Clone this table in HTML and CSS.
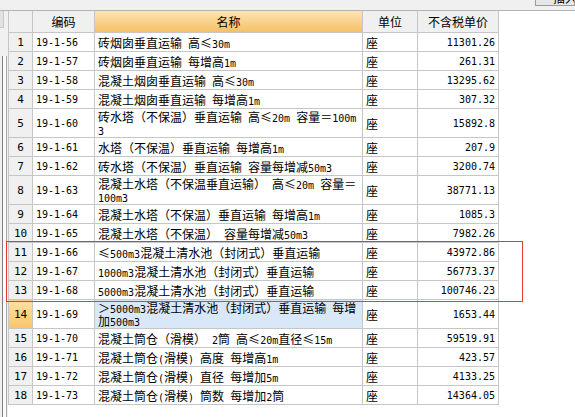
FILE: index.html
```html
<!DOCTYPE html>
<html lang="zh-CN">
<head>
<meta charset="utf-8">
<title>定额</title>
<link rel="stylesheet" href="styles.css">
</head>
<body>
<div class="app">
  <div class="toolbar"><span class="btn">插入</span></div>
  <div class="main">
    <div class="side"><div class="side-top"></div><div class="side-track"></div></div>
    <table class="grid">
      <colgroup><col class="c-no"><col class="c-code"><col class="c-name"><col class="c-unit"><col class="c-price"></colgroup>
      <thead>
        <tr><th class="h-no"></th><th>编码</th><th class="h-name">名称</th><th>单位</th><th>不含税单价</th></tr>
      </thead>
      <tbody>
        <tr><td class="no">1</td><td class="code">19-1-56</td><td class="name">砖烟囱垂直运输<span class="a"> </span>高≤<span class="a">30m</span></td><td class="unit">座</td><td class="price">11301.26</td></tr>
        <tr><td class="no">2</td><td class="code">19-1-57</td><td class="name">砖烟囱垂直运输<span class="a"> </span>每增高<span class="a">1m</span></td><td class="unit">座</td><td class="price">261.31</td></tr>
        <tr><td class="no">3</td><td class="code">19-1-58</td><td class="name">混凝土烟囱垂直运输<span class="a"> </span>高≤<span class="a">30m</span></td><td class="unit">座</td><td class="price">13295.62</td></tr>
        <tr><td class="no">4</td><td class="code">19-1-59</td><td class="name">混凝土烟囱垂直运输<span class="a"> </span>每增高<span class="a">1m</span></td><td class="unit">座</td><td class="price">307.32</td></tr>
        <tr class="tall"><td class="no">5</td><td class="code">19-1-60</td><td class="name">砖水塔（不保温）垂直运输<span class="a"> </span>高≤<span class="a">20m </span>容量＝<span class="a">100m</span><br><span class="a">3</span></td><td class="unit">座</td><td class="price">15892.8</td></tr>
        <tr><td class="no">6</td><td class="code">19-1-61</td><td class="name">水塔（不保温）垂直运输<span class="a"> </span>每增高<span class="a">1m</span></td><td class="unit">座</td><td class="price">207.9</td></tr>
        <tr><td class="no">7</td><td class="code">19-1-62</td><td class="name">砖水塔（不保温）垂直运输<span class="a"> </span>容量每增减<span class="a">50m3</span></td><td class="unit">座</td><td class="price">3200.74</td></tr>
        <tr class="tall"><td class="no">8</td><td class="code">19-1-63</td><td class="name">混凝土水塔（不保温垂直运输）<span class="a"> </span>高≤<span class="a">20m </span>容量＝<br><span class="a">100m3</span></td><td class="unit">座</td><td class="price">38771.13</td></tr>
        <tr><td class="no">9</td><td class="code">19-1-64</td><td class="name">混凝土水塔（不保温）垂直运输<span class="a"> </span>每增高<span class="a">1m</span></td><td class="unit">座</td><td class="price">1085.3</td></tr>
        <tr><td class="no">10</td><td class="code">19-1-65</td><td class="name">混凝土水塔（不保温）<span class="a"> </span>容量每增减<span class="a">50m3</span></td><td class="unit">座</td><td class="price">7982.26</td></tr>
        <tr><td class="no">11</td><td class="code">19-1-66</td><td class="name">≤<span class="a">500m3</span>混凝土清水池（封闭式）垂直运输</td><td class="unit">座</td><td class="price">43972.86</td></tr>
        <tr><td class="no">12</td><td class="code">19-1-67</td><td class="name"><span class="a">1000m3</span>混凝土清水池（封闭式）垂直运输</td><td class="unit">座</td><td class="price">56773.37</td></tr>
        <tr><td class="no">13</td><td class="code">19-1-68</td><td class="name"><span class="a">5000m3</span>混凝土清水池（封闭式）垂直运输</td><td class="unit">座</td><td class="price">100746.23</td></tr>
        <tr class="tall current"><td class="no">14</td><td class="code">19-1-69</td><td class="name">＞<span class="a">5000m3</span>混凝土清水池（封闭式）垂直运输<span class="a"> </span>每增<br>加<span class="a">500m3</span></td><td class="unit">座</td><td class="price">1653.44</td></tr>
        <tr><td class="no">15</td><td class="code">19-1-70</td><td class="name">混凝土筒仓（滑模）<span class="a"> 2</span>筒<span class="a"> </span>高≤<span class="a">20m</span>直径≤<span class="a">15m</span></td><td class="unit">座</td><td class="price">59519.91</td></tr>
        <tr><td class="no">16</td><td class="code">19-1-71</td><td class="name">混凝土筒仓<span class="a">(</span>滑模<span class="a">) </span>高度<span class="a"> </span>每增高<span class="a">1m</span></td><td class="unit">座</td><td class="price">423.57</td></tr>
        <tr><td class="no">17</td><td class="code">19-1-72</td><td class="name">混凝土筒仓<span class="a">(</span>滑模<span class="a">) </span>直径<span class="a"> </span>每增加<span class="a">5m</span></td><td class="unit">座</td><td class="price">4133.25</td></tr>
        <tr><td class="no">18</td><td class="code">19-1-73</td><td class="name">混凝土筒仓<span class="a">(</span>滑模<span class="a">) </span>筒数<span class="a"> </span>每增加<span class="a">2</span>筒</td><td class="unit">座</td><td class="price">14364.05</td></tr>
      </tbody>
    </table>
    <div class="mark"></div>
  </div>
</div>
</body>
</html>
```

FILE: styles.css
```css
html, body {
  margin: 0;
  padding: 0;
  background: #ffffff;
}
body {
  font-family: "Noto Sans CJK SC", "Noto Sans", sans-serif;
  font-size: 12px;
  color: #000;
}
.app {
  width: 575px;
  height: 417px;
  overflow: hidden;
  display: flex;
  flex-direction: column;
}
.toolbar {
  height: 10px;
  background: #f0f0f0;
  border-bottom: 1px solid #b4b4b4;
  display: flex;
  justify-content: flex-end;
  overflow: hidden;
}
.btn {
  margin-top: -14px;
  height: 20px;
  width: 40px;
  box-sizing: border-box;
  border: 1px solid #9c9c9c;
  background: #e6e6e6;
  line-height: 22px;
  padding-left: 17px;
  white-space: nowrap;
  overflow: hidden;
  font-size: 12px;
}
.main {
  position: relative;
  flex: 1;
  display: flex;
  align-items: flex-start;
}
.side {
  width: 8px;
  align-self: stretch;
  background: #f0f0f0;
  display: flex;
  flex-direction: column;
}
.side-top {
  height: 16px;
  width: 3px;
  background: #e2e2e2;
  border-right: 1px solid #c8c8c8;
  border-bottom: 1px solid #c8c8c8;
}
.side-track {
  flex: 1;
  margin-top: 28px;
  margin-left: 2px;
  width: 3px;
  background: #fbfbfb;
  border-left: 1px solid #7c7c7c;
  border-right: 1px solid #a8a8a8;
}
.grid {
  border-collapse: collapse;
  table-layout: fixed;
  width: 491px;
  background: #fff;
}
.c-no { width: 24px; }
.c-code { width: 62px; }
.c-name { width: 268px; }
.c-unit { width: 55px; }
.c-price { width: 81px; }
th, td {
  border: 1px solid #c6c6c6;
  padding: 0 3px;
  white-space: nowrap;
  overflow: hidden;
  line-height: 13px;
}
th {
  border-top: none;
  height: 21px;
  background: #f0f0f0;
  font-weight: normal;
  text-align: center;
  padding: 0;
}
th.h-name {
  background: linear-gradient(#fde3b3, #f4c066);
}
td {
  height: 18px;
}
tr.tall td {
  height: 28px;
}
td.no {
  background: #f0f0f0;
  text-align: center;
  padding: 0;
  font-family: "DejaVu Sans Mono", monospace;
  font-size: 11px;
}
td.code, td.price {
  font-family: "DejaVu Sans Mono", monospace;
  font-size: 10px;
}
td.price {
  text-align: right;
}
.a {
  font-family: "DejaVu Sans Mono", monospace;
  font-size: 10px;
  line-height: 8px;
  white-space: pre;
}
tr.current td.no {
  background: linear-gradient(#fde0a4, #f9c56c);
}
tr.current td.name {
  background: #d9e8f8;
}
.mark {
  position: absolute;
  left: 6px;
  top: 230px;
  width: 517px;
  height: 61px;
  box-sizing: border-box;
  border: 1px solid #e8383c;
  pointer-events: none;
}
```
